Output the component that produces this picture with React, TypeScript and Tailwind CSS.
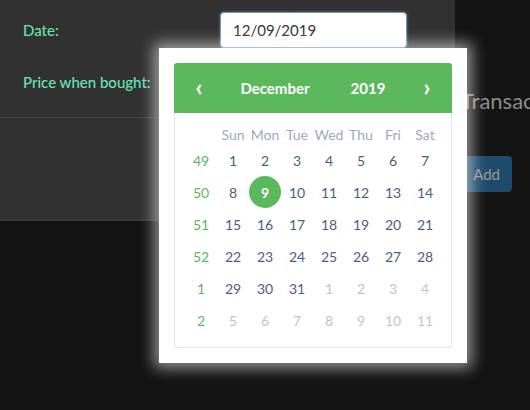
const weekdays = ['Sun', 'Mon', 'Tue', 'Wed', 'Thu', 'Fri', 'Sat'];

// six rows of the December 2019 month view, with ISO week numbers
const weeks: { wk: number; days: { d: number; out?: boolean }[] }[] = [
  { wk: 49, days: [1, 2, 3, 4, 5, 6, 7].map(d => ({ d })) },
  { wk: 50, days: [8, 9, 10, 11, 12, 13, 14].map(d => ({ d })) },
  { wk: 51, days: [15, 16, 17, 18, 19, 20, 21].map(d => ({ d })) },
  { wk: 52, days: [22, 23, 24, 25, 26, 27, 28].map(d => ({ d })) },
  { wk: 1, days: [29, 30, 31].map(d => ({ d })).concat([1, 2, 3, 4].map(d => ({ d, out: true }))) },
  { wk: 2, days: [5, 6, 7, 8, 9, 10, 11].map(d => ({ d, out: true })) },
];

function DatePicker() {
  return (
    <div className="absolute left-[159px] top-[48px] w-[308px] bg-white p-[15px] shadow-[0_0_14px_5px_rgba(255,255,255,0.55)]">
      <div className="flex h-[50px] items-center rounded-t-[3px] bg-[#5cb85c] pl-[9px] text-white">
        <span className="w-[32px] pb-[3px] text-center text-[24px] font-bold leading-none">‹</span>
        <span className="w-[120px] text-center text-[15px] font-bold">December</span>
        <span className="w-[66px] text-center text-[15px] font-bold">2019</span>
        <span className="w-[10px]" />
        <span className="w-[32px] pb-[3px] text-center text-[24px] font-bold leading-none">›</span>
      </div>
      <div className="rounded-b-[3px] border border-t-0 border-[#e6e6e6] px-[10px] pt-[11px] pb-[11px]">
        <div className="grid h-[20px] grid-cols-8 items-center text-center text-[14px] text-[#9aabbf]">
          <span />
          {weekdays.map(w => (
            <span key={w}>{w}</span>
          ))}
        </div>
        {weeks.map(row => (
          <div key={row.wk} className="grid h-[32px] grid-cols-8 items-center text-center text-[14px]">
            <span className="text-[#5cb85c]">{row.wk}</span>
            {row.days.map((day, i) =>
              row.wk === 50 && day.d === 9 ? (
                <span key={i} className="flex justify-center">
                  <span className="flex h-[32px] w-[32px] items-center justify-center rounded-full bg-[#5cb85c] font-bold text-white">
                    9
                  </span>
                </span>
              ) : (
                <span key={i} className={day.out ? 'text-[#c4c4c4]' : 'text-[#4a6080]'}>
                  {day.d}
                </span>
              )
            )}
          </div>
        ))}
      </div>
    </div>
  );
}

export default function App() {
  return (
    <div className="relative flex h-[410px] w-[530px] overflow-hidden bg-[#131313] font-['Lato','Liberation_Sans',sans-serif]">
      <div className="h-[221px] w-[455px] shrink-0 border-b border-[#3c3c3c] bg-[#313131]">
        <div className="flex h-[58px] items-center pl-[23px] pt-[2px]">
          <span className="w-[197px] text-[15px] font-medium text-[#68e6b3]">Date:</span>
          <div className="flex h-[36px] w-[187px] items-center rounded-[4px] border border-[#7393b8] bg-white pl-[12px] text-[15px] text-[#333] shadow-[0_0_3px_rgba(120,160,210,0.6)]">
            12/09/2019
          </div>
        </div>
        <div className="flex h-[60px] items-center border-b border-[#444] pb-[10px] pl-[23px]">
          <span className="text-[15px] font-medium text-[#68e6b3]">Price when bought:</span>
        </div>
      </div>
      <div className="flex flex-col pl-[6px]">
        <span className="mt-[85px] whitespace-nowrap text-[22px] leading-[32px] text-[#8c8c8c]">Transactions</span>
        <div className="mt-[39px] -ml-[13px] flex h-[36px] w-[64px] items-center justify-end rounded-[4px] bg-[#1f4b6b] pr-[12px] text-[15px] text-[#9a9a9a]">
          Add
        </div>
      </div>
      <DatePicker />
    </div>
  );
}
